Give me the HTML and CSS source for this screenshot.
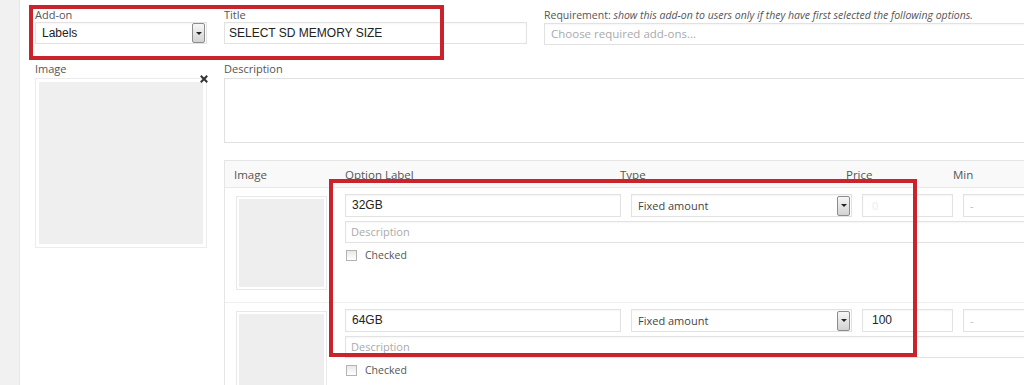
FILE: index.html
```html
<!DOCTYPE html>
<html lang="en">
  <head>
    <meta charset="UTF-8" />
    <meta name="viewport" content="width=device-width, initial-scale=1.0" />
    <title>Product Add-ons</title>
    <link rel="stylesheet" href="styles.css">
  </head>
  <body>
    <div class="screen">
      <div class="strip"></div>
      <div class="main">
        <div class="top">
          <div class="field">
            <div class="lbl">Add-on</div>
            <div class="select arial"><span>Labels</span><span class="sel-btn"></span></div>
          </div>
          <div class="field">
            <div class="lbl">Title</div>
            <div class="input arial title">SELECT SD MEMORY SIZE</div>
          </div>
          <div class="field req">
            <div class="lbl">Requirement: <em>show this add-on to users only if they have first selected the following options.</em></div>
            <div class="input ph">Choose required add-ons...</div>
          </div>
        </div>

        <div class="body">
          <div class="field">
            <div class="lbl">Image</div>
            <div class="img-big">
              <div class="img-fill"></div>
              <span class="close">
                <svg width="10" height="10" viewBox="0 0 10 10"><path d="M2.5 2.5 L7.5 7.5 M7.5 2.5 L2.5 7.5" stroke="#333" stroke-width="2" stroke-linecap="square"/></svg>
              </span>
            </div>
          </div>
          <div class="field">
            <div class="lbl">Description</div>
            <div class="textarea"></div>

            <div class="options">
              <div class="opt-head">
                <span>Image</span>
                <span>Option Label</span>
                <span>Type</span>
                <span>Price</span>
                <span>Min</span>
              </div>

              <div class="opt-row">
                <div class="opt-img"><div class="thumb"></div></div>
                <div class="opt-main">
                  <div class="opt-line">
                    <div class="input arial">32GB</div>
                    <div class="select"><span>Fixed amount</span><span class="sel-btn"></span></div>
                    <div class="input price faint">0</div>
                    <div class="input min">-</div>
                  </div>
                  <div class="input ph opt-desc">Description</div>
                  <div class="check"><span class="box"></span>Checked</div>
                </div>
              </div>

              <div class="opt-row">
                <div class="opt-img"><div class="thumb"></div></div>
                <div class="opt-main">
                  <div class="opt-line">
                    <div class="input arial">64GB</div>
                    <div class="select"><span>Fixed amount</span><span class="sel-btn"></span></div>
                    <div class="input price arial">100</div>
                    <div class="input min">-</div>
                  </div>
                  <div class="input ph opt-desc">Description</div>
                  <div class="check"><span class="box"></span>Checked</div>
                </div>
              </div>
            </div>
          </div>
        </div>
      </div>

      <div class="mark mark-a"></div>
      <div class="mark mark-b"></div>
    </div>
  </body>
</html>
```

FILE: styles.css
```css
body {
  margin: 0;
  font-family: "Open Sans", sans-serif;
  color: #444;
  background-color: #fff;
  overflow: hidden;
}
.screen {
  position: relative;
  display: flex;
  width: 1024px;
  height: 385px;
  overflow: hidden;
}
.strip {
  flex: none;
  width: 19px;
  background-color: #f1f1f1;
  border-right: 1px solid #e6e6e6;
}
.main {
  flex: none;
  width: 1080px;
  padding: 8px 0 0 15px;
}
.top {
  display: grid;
  grid-template-columns: 172px 303px 1fr;
  gap: 17px;
}
.lbl {
  font-size: 11px;
  line-height: 14px;
  color: #555;
  white-space: nowrap;
}
.req .lbl {
  font-size: 10.5px;
}
.input,
.select {
  box-sizing: border-box;
  height: 22px;
  border: 1px solid #e2e2e2;
  background-color: #fff;
  box-shadow: inset 0 1px 2px rgba(0, 0, 0, 0.04);
  font-size: 11px;
  line-height: 20px;
  padding: 0 6px;
  white-space: nowrap;
  overflow: hidden;
  color: #444;
}
.arial {
  font-family: "Liberation Sans", Arial, sans-serif;
  font-size: 12px;
  color: #222;
}
.title {
  padding-left: 4px;
}
.ph {
  color: #aaa;
}
.req .input {
  margin-top: 1px;
  font-size: 11.5px;
}
.faint {
  color: #ececec;
}
.select {
  display: flex;
  align-items: center;
  justify-content: space-between;
  padding: 0 1px 0 6px;
}
.sel-btn {
  flex: none;
  box-sizing: border-box;
  width: 13px;
  height: 20px;
  border: 1px solid #8c8c8c;
  border-radius: 2px;
  background: linear-gradient(#f7f7f7, #d2d2d2);
  display: flex;
  align-items: center;
  justify-content: center;
}
.sel-btn::after {
  content: "";
  border-left: 3px solid transparent;
  border-right: 3px solid transparent;
  border-top: 3px solid #222;
}
.body {
  display: grid;
  grid-template-columns: 172px 1fr;
  gap: 17px;
  margin-top: 17px;
}
.img-big {
  position: relative;
  box-sizing: border-box;
  margin-top: 2px;
  height: 170px;
  border: 1px solid #ececec;
  padding: 3px;
}
.img-fill {
  height: 100%;
  background-color: #efefef;
}
.close {
  position: absolute;
  top: -5px;
  right: -3px;
  width: 10px;
  height: 10px;
  line-height: 0;
}
.textarea {
  box-sizing: border-box;
  margin-top: 2px;
  height: 65px;
  border: 1px solid #e0e0e0;
}
.options {
  margin-top: 17px;
  border: 1px solid #e5e5e5;
}
.opt-head {
  display: grid;
  grid-template-columns: 120px 275px 226px 107px 1fr;
  align-items: center;
  height: 26px;
  background-color: #f9f9f9;
  border-bottom: 1px solid #e8e8e8;
  font-size: 11.5px;
  color: #555;
}
.opt-head span:first-child {
  padding-left: 9px;
}
.opt-row {
  display: grid;
  grid-template-columns: 120px 1fr;
  height: 114px;
  border-bottom: 1px solid #eee;
}
.opt-img {
  padding: 8px 0 0 11px;
}
.thumb {
  box-sizing: border-box;
  width: 91px;
  height: 94px;
  border: 1px solid #e8e8e8;
  padding: 2px;
  background-color: #eee;
  background-clip: content-box;
}
.opt-main {
  padding-top: 6px;
}
.opt-line {
  display: grid;
  grid-template-columns: 276px 221px 91px 1fr;
  gap: 10px;
}
.opt-line .input,
.opt-line .select {
  height: 23px;
  line-height: 21px;
}
.price {
  padding-left: 9px;
}
.min {
  color: #bbb;
}
.opt-desc {
  margin-top: 4px;
  padding-left: 5px;
}
.check {
  display: flex;
  align-items: center;
  height: 12px;
  margin-top: 6px;
  padding-left: 1px;
  font-size: 10.5px;
  color: #555;
}
.box {
  box-sizing: border-box;
  width: 11px;
  height: 11px;
  margin-right: 8px;
  border: 1px solid #b4b4b4;
  background: linear-gradient(#e9e9e9, #fff);
}
.mark {
  position: absolute;
  box-sizing: border-box;
  border: 4px solid #c9232b;
}
.mark-a {
  left: 29px;
  top: 5px;
  width: 415px;
  height: 55px;
}
.mark-b {
  left: 329px;
  top: 179px;
  width: 588px;
  height: 178px;
}
```
